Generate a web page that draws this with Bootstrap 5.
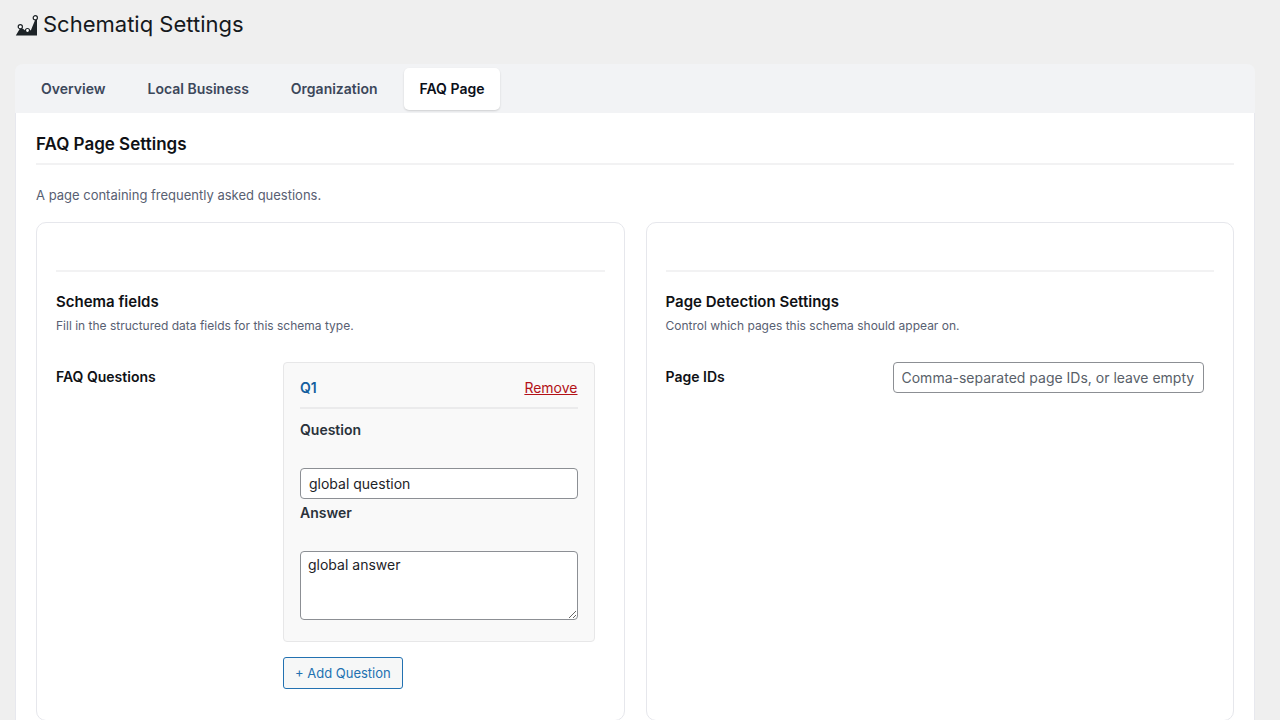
<!DOCTYPE html>
<html lang="en">
<head>
<meta charset="utf-8">
<meta name="viewport" content="width=device-width, initial-scale=1">
<title>Schematiq Settings</title>
<link href="https://cdn.jsdelivr.net/npm/bootstrap@5.3.0/dist/css/bootstrap.min.css" rel="stylesheet">
<style>
  body { background: #efefef; color: #1d2327; font: 14px/20px Inter, "Liberation Sans", sans-serif; padding: 8px 25px 0 15px; }
  .page-title { font-size: 22px; line-height: 32px; font-weight: 400; gap: 5px; color: #15191d; }
  .page-title svg { width: 23px; height: 23px; }
  .tab-strip { background: #f2f3f5; border-radius: 8px 8px 0 0; padding: 4px 10px 3px; gap: 10px; margin-top: 24px; }
  .tab-strip .nav-link { color: #3c475a; font-weight: 600; padding: 11px 16px; border-radius: 5px; }
  .tab-strip .nav-link.active { background: #fff; color: #0b0f19; box-shadow: 0 1px 2px rgba(0,0,0,.15); }
  .panel { background: #fff; border: solid #e7e8ee; border-width: 0 1px; padding: 19px 20px 0; }
  .panel-title { font-size: 17px; line-height: 24px; font-weight: 600; color: #0f1115; padding-bottom: 7px; border-bottom: 2px solid #f2f2f3; margin-bottom: 20px; }
  .intro { font-size: 13px; color: #586072; margin-bottom: 17px; }
  .settings { column-gap: 21px; }
  .box { border: 1px solid #e6e7ec; border-radius: 10px; padding: 47px 19px 31px; }
  .section-head { border-top: 2px solid #f2f2f3; padding-top: 19px; margin-bottom: 27px; }
  .section-head h3 { font-size: 15px; line-height: 22px; font-weight: 600; color: #0f1115; margin-bottom: 3px; }
  .section-head p { font-size: 12px; line-height: 19px; color: #586072; margin: 0; }
  .field-name { flex: 0 0 227px; font-weight: 600; color: #0f1115; padding-top: 5px; }
  .field-body { padding-right: 10px; }
  .form-control { border: 1px solid #8c8f94; border-radius: 4px; color: #1d2327; font-size: 14px; line-height: 20px; padding: 4px 8px; min-height: 31px; }
  .form-control::placeholder { color: #595f69; }
  textarea.form-control { height: 69px; padding: 3px 7px; display: block; }
  .question { background: #f9f9f9; border: 1px solid #e7e7e8; border-radius: 4px; padding: 15px 16px 21px; }
  .question-head { border-bottom: 2px solid #ebebec; padding-bottom: 9px; margin-bottom: 11px; }
  .question-no { color: #135e9e; font-weight: 600; }
  .remove-btn { color: #b31217; font-size: 14px; line-height: 20px; }
  .question label { font-weight: 600; display: block; color: #2a323b; margin-bottom: 28px; }
  .question .form-control + label { margin-top: 4px; }
  .add-btn { color: #2271b1; background: #f6f7f7; border: 1px solid #2271b1; border-radius: 3px; font-size: 13px; line-height: 20px; padding: 5px 11px; margin-top: 15px; }
</style>
</head>
<body>
<header>
  <h1 class="page-title d-flex align-items-center mb-0">
    <svg viewBox="0 0 23 23" aria-hidden="true">
      <path d="M.8 22.500 5 15.500 8 15.800 12 19 16 17 20.500 6 22 5.500V22.500Z" fill="#1d2327"/>
      <g fill="#fff" stroke="#1d2327" stroke-width="1.200"><circle cx="5.300" cy="13.700" r="2.100"/><circle cx="12.500" cy="17.500" r="2"/><circle cx="20.300" cy="4.800" r="2.100"/></g>
    </svg>
    Schematiq Settings
  </h1>
</header>
<nav class="nav tab-strip" aria-label="Schema types">
  <a class="nav-link" href="#overview">Overview</a>
  <a class="nav-link" href="#business">Local Business</a>
  <a class="nav-link" href="#organization">Organization</a>
  <a class="nav-link active" aria-current="page" href="#faq">FAQ Page</a>
</nav>
<main class="panel">
  <h2 class="panel-title">FAQ Page Settings</h2>
  <p class="intro">A page containing frequently asked questions.</p>
  <div class="d-flex settings">
    <section class="col box">
      <div class="section-head"><h3>Schema fields</h3><p>Fill in the structured data fields for this schema type.</p></div>
      <div class="d-flex">
        <div class="field-name">FAQ Questions</div>
        <div class="field-body flex-grow-1">
          <div class="question">
            <div class="question-head d-flex justify-content-between">
              <span class="question-no">Q1</span>
              <button type="button" class="btn btn-link p-0 border-0 remove-btn">Remove</button>
            </div>
            <label for="q1">Question</label>
            <input id="q1" class="form-control" type="text" value="global question">
            <label for="a1">Answer</label>
            <textarea id="a1" class="form-control">global answer</textarea>
          </div>
          <button type="button" class="btn add-btn">+ Add Question</button>
        </div>
      </div>
    </section>
    <section class="col box">
      <div class="section-head"><h3>Page Detection Settings</h3><p>Control which pages this schema should appear on.</p></div>
      <div class="d-flex">
        <label class="field-name" for="ids">Page IDs</label>
        <div class="field-body flex-grow-1"><input id="ids" class="form-control" type="text" placeholder="Comma-separated page IDs, or leave empty"></div>
      </div>
    </section>
  </div>
</main>
<script src="https://cdn.jsdelivr.net/npm/bootstrap@5.3.0/dist/js/bootstrap.bundle.min.js"></script>
</body>
</html>
